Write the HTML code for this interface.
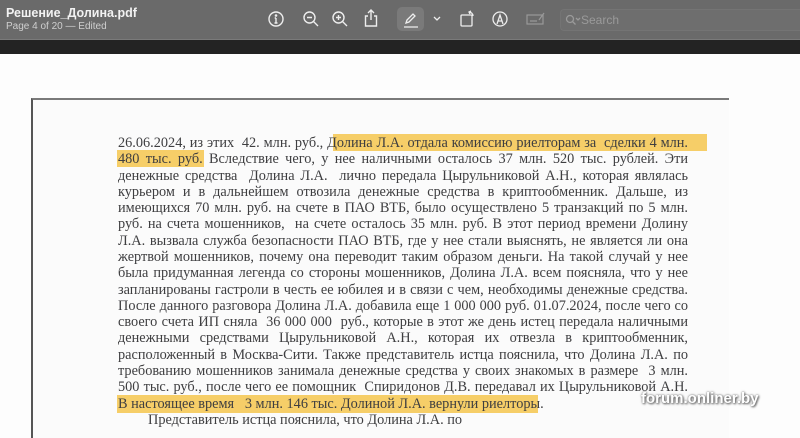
<!DOCTYPE html>
<html><head><meta charset="utf-8">
<style>
*{margin:0;padding:0;box-sizing:border-box}
body{width:800px;height:418px;overflow:hidden;background:#fdfdfd;position:relative;font-family:"Liberation Sans",sans-serif}
.tb{position:absolute;left:0;top:0;width:800px;height:40px;background:#6a6a6a;border-bottom:1px solid #7a7a7a}
.dk{position:absolute;left:0;top:40px;width:800px;height:14px;background:#232323}
.title{position:absolute;left:6px;top:6px;color:#f2f2f2;font-weight:bold;font-size:12.5px}
.sub{position:absolute;left:6px;top:21px;color:#cfcfcf;font-size:10px}
.ic{position:absolute;top:10px}
.search{position:absolute;left:560px;top:9px;width:240px;height:22px;border:1px solid #747474;border-right:none;border-radius:4px 0 0 4px;background:#6e6e6e;color:#9a9a9a;font-size:12px;padding:3px 0 0 20px}
.page{position:absolute;left:31px;top:98px;width:698px;height:340px;border-left:2px solid #555;border-top:2px solid #7a7a7a;background:#fbfbfb}
.ln{position:absolute;left:118px;width:570px;font-family:"Liberation Serif",serif;font-size:14.3px;color:#3e3e40;text-align:justify;text-align-last:justify;white-space:nowrap;line-height:16px;height:16px}
.ln.j{white-space:normal}
.hl{position:absolute;background:#f5c64e;opacity:.85}
.wm{position:absolute;left:641px;top:390px;color:#fff;font-weight:bold;font-size:15px;text-shadow:0 0 2px #666,1px 1px 2px #555}
</style></head><body>
<div class="tb"></div>
<div class="dk"></div>
<div class="title">Решение_Долина.pdf</div>
<div class="sub">Page 4 of 20 — Edited</div>
<svg class="ic" style="left:267px" width="18" height="18" viewBox="0 0 18 18" fill="none" stroke="#eee" stroke-width="1.4"><circle cx="9" cy="9" r="7"/><path d="M9 8v5M7.5 13h3M7.7 8H9"/><circle cx="9" cy="5.5" r=".6" fill="#eee"/></svg>
<svg class="ic" style="left:302px" width="18" height="18" viewBox="0 0 18 18" fill="none" stroke="#eee" stroke-width="1.4"><circle cx="7.5" cy="7.5" r="5.5"/><path d="M11.5 11.5l4.5 4.5M5 7.5h5"/></svg>
<svg class="ic" style="left:331px" width="18" height="18" viewBox="0 0 18 18" fill="none" stroke="#eee" stroke-width="1.4"><circle cx="7.5" cy="7.5" r="5.5"/><path d="M11.5 11.5l4.5 4.5M5 7.5h5M7.5 5v5"/></svg>
<svg class="ic" style="left:362px;top:8px" width="18" height="20" viewBox="0 0 18 20" fill="none" stroke="#eee" stroke-width="1.4"><path d="M6 8H3.5v10h11V8H12M9 12V2M6 5l3-3 3 3"/></svg>
<div style="position:absolute;left:397px;top:7px;width:27px;height:24px;background:#7a7a7a;border-radius:5px"></div>
<svg class="ic" style="left:402px;top:11px" width="18" height="18" viewBox="0 0 18 18" fill="none" stroke="#eee" stroke-width="1.3"><path d="M4 12l1-3 6-6 2 2-6 6zM2 16h14"/></svg>
<svg class="ic" style="left:433px;top:16px" width="8" height="6" viewBox="0 0 8 6" fill="none" stroke="#eee" stroke-width="1.3"><path d="M1 1l3 3 3-3"/></svg>
<svg class="ic" style="left:458px;top:9px" width="18" height="20" viewBox="0 0 18 20" fill="none" stroke="#eee" stroke-width="1.3"><rect x="3" y="6" width="11" height="11" rx="1"/><path d="M11 3a4 4 0 0 1 4 4M13 2l-2 1 1 2"/></svg>
<svg class="ic" style="left:491px" width="18" height="18" viewBox="0 0 18 18" fill="none" stroke="#eee" stroke-width="1.3"><circle cx="9" cy="9" r="7"/><path d="M6 14l3-9 3 9M7 11h4"/></svg>
<svg class="ic" style="left:525px" width="22" height="18" viewBox="0 0 22 18" fill="none" stroke="#999" stroke-width="1.2"><rect x="2" y="5" width="16" height="9"/><path d="M5 11h7M14 10l5-7"/></svg>
<div class="search">Search</div>
<svg style="position:absolute;left:565px;top:14px" width="16" height="12" viewBox="0 0 16 12" fill="none" stroke="#9a9a9a" stroke-width="1.3"><circle cx="5" cy="5" r="3.5"/><path d="M7.5 7.5l3 3M11 4l2 2 2-2"/></svg>
<div class="page"></div>
<div class="hl" style="left:333px;top:134px;width:374px;height:17px"></div>
<div class="hl" style="left:117px;top:150px;width:87px;height:17px"></div>
<div class="hl" style="left:117px;top:395px;width:421px;height:18px"></div>
<div class="ln" style="top:135px">26.06.2024, из этих &nbsp;42. млн. руб., Долина Л.А. отдала комиссию риелторам за &nbsp;сделки 4 млн.</div>
<div class="ln" style="top:151px">480 тыс. руб. Вследствие чего, у нее наличными осталось 37 млн. 520 тыс. рублей. Эти</div>
<div class="ln" style="top:168px">денежные средства &nbsp;Долина Л.А. &nbsp;лично передала Цырульниковой А.Н., которая являлась</div>
<div class="ln" style="top:184px">курьером и в дальнейшем отвозила денежные средства в криптообменник. Дальше, из</div>
<div class="ln" style="top:200px">имеющихся 70 млн. руб. на счете в ПАО ВТБ, было осуществлено 5 транзакций по 5 млн.</div>
<div class="ln" style="top:216px">руб. на счета мошенников, &nbsp;на счете осталось 35 млн. руб. В этот период времени Долину</div>
<div class="ln" style="top:233px">Л.А. вызвала служба безопасности ПАО ВТБ, где у нее стали выяснять, не является ли она</div>
<div class="ln" style="top:249px">жертвой мошенников, почему она переводит таким образом деньги. На такой случай у нее</div>
<div class="ln" style="top:265px">была придуманная легенда со стороны мошенников, Долина Л.А. всем поясняла, что у нее</div>
<div class="ln" style="top:282px">запланированы гастроли в честь ее юбилея и в связи с чем, необходимы денежные средства.</div>
<div class="ln" style="top:298px">После данного разговора Долина Л.А. добавила еще 1 000 000 руб. 01.07.2024, после чего со</div>
<div class="ln" style="top:314px">своего счета ИП сняла &nbsp;36 000 000 &nbsp;руб., которые в этот же день истец передала наличными</div>
<div class="ln" style="top:330px">денежными средствами Цырульниковой А.Н., которая их отвезла в криптообменник,</div>
<div class="ln" style="top:347px">расположенный в Москва-Сити. Также представитель истца пояснила, что Долина Л.А. по</div>
<div class="ln" style="top:363px">требованию мошенников занимала денежные средства у своих знакомых в размере &nbsp;3 млн.</div>
<div class="ln" style="top:379px">500 тыс. руб., после чего ее помощник &nbsp;Спиридонов Д.В. передавал их Цырульниковой А.Н.</div>
<div class="ln" style="top:396px;text-align:left;text-align-last:left">В настоящее время &nbsp;&nbsp;3 млн. 146 тыс. Долиной Л.А. вернули риелторы.</div>
<div class="ln" style="top:412px;left:148px;text-align:left;text-align-last:left">Представитель истца пояснила, что Долина Л.А. по</div>
<div class="wm">forum.onliner.by</div>
</body></html>
